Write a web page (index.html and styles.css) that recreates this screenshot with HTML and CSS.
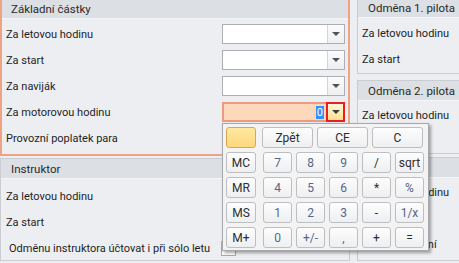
FILE: index.html
```html
<!DOCTYPE html>
<html lang="cs">
<head>
  <meta charset="UTF-8">
  <title>Sazby</title>
  <link rel="stylesheet" href="styles.css">
</head>
<body>
  <div class="screen">
    <div class="col-left">
      <section class="group group-active">
        <div class="group-head">Základní částky</div>
        <div class="group-body">
          <div class="row"><span class="label">Za letovou hodinu</span><div class="combo"><span class="value"></span><span class="drop"><i class="arrow"></i></span></div></div>
          <div class="row"><span class="label">Za start</span><div class="combo"><span class="value"></span><span class="drop"><i class="arrow"></i></span></div></div>
          <div class="row"><span class="label">Za naviják</span><div class="combo"><span class="value"></span><span class="drop"><i class="arrow"></i></span></div></div>
          <div class="row">
            <span class="label">Za motorovou hodinu</span>
            <div class="combo combo-focus">
              <span class="value"><span class="sel">0</span></span>
              <span class="drop"><i class="arrow"></i></span>
              <div class="calc">
                <div class="calc-top">
                  <button class="key key-display"></button>
                  <button class="key key-wide">Zpět</button>
                  <button class="key key-wide">CE</button>
                  <button class="key key-wide">C</button>
                </div>
                <div class="calc-row">
                  <button class="key key-mem">MC</button>
                  <button class="key num">7</button>
                  <button class="key num">8</button>
                  <button class="key num">9</button>
                  <button class="key op">/</button>
                  <button class="key op">sqrt</button>
                </div>
                <div class="calc-row">
                  <button class="key key-mem">MR</button>
                  <button class="key num">4</button>
                  <button class="key num">5</button>
                  <button class="key num">6</button>
                  <button class="key op">*</button>
                  <button class="key num">%</button>
                </div>
                <div class="calc-row">
                  <button class="key key-mem">MS</button>
                  <button class="key num">1</button>
                  <button class="key num">2</button>
                  <button class="key num">3</button>
                  <button class="key op">-</button>
                  <button class="key num">1/x</button>
                </div>
                <div class="calc-row">
                  <button class="key key-mem">M+</button>
                  <button class="key num">0</button>
                  <button class="key num">+/-</button>
                  <button class="key num">,</button>
                  <button class="key op">+</button>
                  <button class="key op">=</button>
                </div>
              </div>
            </div>
          </div>
          <div class="row"><span class="label">Provozní poplatek para</span></div>
        </div>
      </section>

      <section class="group group-instr">
        <div class="group-head">Instruktor</div>
        <div class="group-body">
          <div class="row"><span class="label">Za letovou hodinu</span><div class="combo"><span class="value"></span><span class="drop"><i class="arrow"></i></span></div></div>
          <div class="row"><span class="label">Za start</span><div class="combo"><span class="value"></span><span class="drop"><i class="arrow"></i></span></div></div>
          <div class="row"><span class="label label-check">Odměnu instruktora účtovat i při sólo letu</span><span class="check"></span></div>
        </div>
      </section>
    </div>

    <div class="col-right">
      <section class="group panel-1">
        <div class="group-head">Odměna 1. pilota</div>
        <div class="group-body">
          <div class="row"><span class="label">Za letovou hodinu</span></div>
          <div class="row"><span class="label">Za start</span></div>
        </div>
      </section>
      <section class="group panel-2">
        <div class="group-head">Odměna 2. pilota</div>
        <div class="group-body">
          <div class="row"><span class="label">Za letovou hodinu</span></div>
          <div class="row"><span class="label">Za start</span></div>
        </div>
      </section>
      <section class="group panel-3">
        <div class="group-head">Vlekař</div>
        <div class="group-body">
          <div class="row"><span class="label">Za letovou hodinu</span></div>
          <div class="row"><span class="label">Za start</span></div>
          <div class="row"><span class="label">Za přezkoušení</span></div>
        </div>
      </section>
    </div>
  </div>
</body>
</html>
```

FILE: styles.css
```css
body {
  margin: 0;
  background: #eceef1;
  color: #1e1e1e;
  font-family: Roboto, 'Noto Sans', sans-serif;
  font-size: 11px;
  overflow: hidden;
}

.screen {
  display: flex;
  width: 459px;
  height: 263px;
  overflow: hidden;
}

.col-left {
  width: 350px;
  flex: none;
  margin-top: -3px;
}

.col-right {
  width: 120px;
  flex: none;
  margin-left: 7px;
  margin-top: -3px;
}

/* group boxes */
.group {
  border: 1px solid #c9ccd1;
  background: #eceef1;
}

.group-active {
  border: 2px solid #f0a285;
}

.group-head {
  height: 19px;
  line-height: 20px;
  padding-left: 10px;
  background: #dcdfe3;
  border-bottom: 1px solid #f4f5f7;
  font-size: 11.5px;
  color: #2a2a2a;
}

.group-active .group-head {
  padding-left: 9px;
}

.group-body {
  display: flex;
  flex-direction: column;
  gap: 6px;
  padding: 5px 3px 6px 4px;
}

.group-instr {
  margin-top: 2px;
}

.group-instr .group-body {
  padding: 7px 3px 2px 5px;
}

.panel-1 .group-body {
  padding: 5px 0 4px 4px;
}

.panel-2 {
  margin-top: 6px;
}

.panel-2 .group-body {
  padding: 4px 0 2px 4px;
}

.panel-3 {
  margin-top: 3px;
}

.panel-3 .group-body {
  padding: 4px 0 6px 4px;
}

.row {
  display: flex;
  align-items: center;
  height: 20px;
}

.label {
  flex: 1;
  white-space: nowrap;
}

.label-check {
  padding-left: 3px;
}

.check {
  width: 13px;
  height: 13px;
  border: 1px solid #a7a9ad;
  background: #fff;
  margin-right: 110px;
}

/* combo editors */
.combo {
  position: relative;
  display: flex;
  width: 123px;
  height: 20px;
  box-sizing: border-box;
  border: 1px solid #abaeb3;
  background: #fff;
}

.value {
  flex: 1;
  display: flex;
  align-items: center;
  justify-content: flex-end;
  padding-right: 3px;
}

.drop {
  width: 16px;
  display: flex;
  align-items: center;
  justify-content: center;
  border-left: 1px solid #d3d5d9;
  background: linear-gradient(#fbfbfb, #eeeff1);
}

.arrow {
  width: 0;
  height: 0;
  border-left: 4px solid transparent;
  border-right: 4px solid transparent;
  border-top: 4px solid #505458;
}

.combo-focus {
  border: 2px solid #eb9b80;
  background: #fdd8bb;
}

.combo-focus .value {
  padding-right: 2px;
}

.sel {
  background: #3390ff;
  color: #fff;
  line-height: 13px;
  padding: 0 1px;
}

.combo-focus .drop {
  margin: -2px -2px -2px 0;
  width: 15px;
  border: 2px solid #ea1c24;
  background: linear-gradient(#fff9d8, #fbe08e);
}

.combo-focus .arrow {
  border-top-color: #3c3c3c;
}

/* calculator dropdown */
.calc {
  position: absolute;
  top: 19px;
  left: -2px;
  width: 207px;
  height: 128px;
  box-sizing: border-box;
  padding: 3px 5px 3px 3px;
  display: flex;
  flex-direction: column;
  gap: 4px;
  background: #f3f3f4;
  border: 1px solid #a6a8ac;
  box-shadow: 2px 2px 3px rgba(0, 0, 0, 0.35);
  z-index: 5;
}

.calc-top,
.calc-row {
  display: flex;
  gap: 4px;
  height: 21px;
}

.key {
  flex: none;
  width: 29px;
  height: 21px;
  padding: 0;
  border: 1px solid #bcbec2;
  border-radius: 3px;
  background: linear-gradient(#fdfdfd, #eeeff1);
  font-family: Roboto, 'Noto Sans', sans-serif;
  font-size: 12px;
  color: #2c2c34;
}

.key-display,
.key-mem {
  width: 30px;
  margin-right: 3px;
}

.key-display {
  margin-right: 2px;
  border-color: #d9a84e;
  background: linear-gradient(#ffe8a0, #fdd87e);
}

.key-wide {
  width: 51px;
}

.num {
  color: #56668a;
}

.op {
  color: #2c2c34;
}
```
